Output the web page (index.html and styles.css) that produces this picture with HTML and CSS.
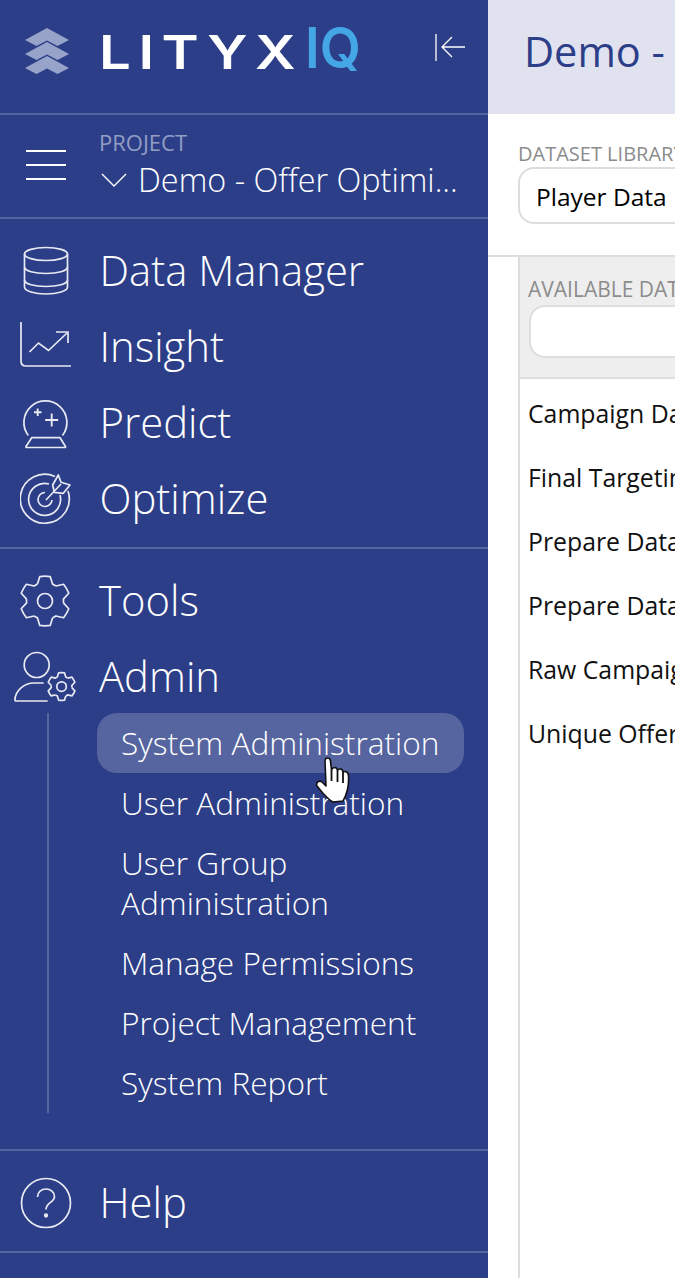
FILE: index.html
```html
<!DOCTYPE html>
<html lang="en">
<head>
<meta charset="utf-8">
<title>LityxIQ</title>
<link rel="stylesheet" href="styles.css">
</head>
<body>
<svg class="defs" width="0" height="0" aria-hidden="true">
  <defs>
    <g id="gear-teeth">
      <g id="tooth"><path d="M18.480 9.100 20.800 1.550Q26 .8 31.200 1.550L33.520 9.100A18.500 18.500 0 0 1 36.870 11.030"/></g>
      <use href="#tooth" transform="rotate(60 26 26)"/>
      <use href="#tooth" transform="rotate(120 26 26)"/>
      <use href="#tooth" transform="rotate(180 26 26)"/>
      <use href="#tooth" transform="rotate(240 26 26)"/>
      <use href="#tooth" transform="rotate(300 26 26)"/>
    </g>
  </defs>
</svg>
<div class="app">
  <aside class="sidebar">
    <div class="brand">
      <svg class="brand-mark" viewBox="0 0 44 46" width="44" height="46"><g fill="#97a3c9"><path d="M22 0 44 12 32.500 18 22 12.500 11.500 18 0 12z"/><path d="M22 14 44 26 32.500 32 22 26.500 11.500 32 0 26z"/><path d="M22 28 44 40 32.500 46 22 40.500 11.500 46 0 40z"/></g></svg>
      <div class="wordmark"><span class="lityx">LITY<span class="lityx-end">X</span></span><span class="iq">IQ</span></div>
      <svg class="collapse" viewBox="0 0 32 28" width="32" height="28" fill="none" stroke="#fff" stroke-width="1.300"><path d="M2 1v27M31 14H8M18 4 8 14l10 10"/></svg>
    </div>
    <div class="project">
      <div class="burger"><span></span><span></span><span></span></div>
      <div class="project-info">
        <div class="project-label">PROJECT</div>
        <div class="project-name">
          <svg viewBox="0 0 26 16" width="26" height="16" fill="none" stroke="#fff" stroke-width="1.400"><path d="M1 2l12 12L25 2"/></svg>
          <span>Demo - Offer Optimi...</span>
        </div>
      </div>
    </div>
    <nav class="nav nav-main">
      <a class="nav-item"><span class="nav-icon">
        <svg viewBox="0 0 52 52" width="52" height="52" fill="none" stroke="#e8eaf3" stroke-width="1.700"><ellipse cx="26" cy="9" rx="21.500" ry="6.500"/><path d="M4.500 9v33c0 4 10 7 21.500 7s21.500-3 21.500-7V9"/><path d="M4.500 22c0 4 10 6.500 21.500 6.500S47.500 26 47.500 22M4.500 35c0 4 10 6.500 21.500 6.500S47.500 39 47.500 35"/></svg>
      </span><span class="nav-label">Data Manager</span></a>
      <a class="nav-item"><span class="nav-icon">
        <svg viewBox="0 0 52 52" width="52" height="52" fill="none" stroke="#e8eaf3" stroke-width="1.700"><path d="M1 1v39c0 3 2 5 5 5h45"/><path d="M9.500 31 18.500 22l10 7.500L47 12"/><path d="M36 11h12v11"/></svg>
      </span><span class="nav-label">Insight</span></a>
      <a class="nav-item"><span class="nav-icon">
        <svg viewBox="0 0 52 52" width="52" height="52" fill="none" stroke="#e8eaf3" stroke-width="1.700" stroke-linejoin="round"><path d="M8.300 38.500A21.500 21.500 0 1 1 42.500 38.500"/><path d="M11.700 40.700H40L45.500 49.500c.3.600 0 1-.7 1H6.700c-.7 0-1-.4-.7-1z"/><path d="M17.700 11.500v7.500M14 15.300h7.500M31.700 16.500v13M25.200 23h13" stroke-width="1.900"/></svg>
      </span><span class="nav-label">Predict</span></a>
      <a class="nav-item"><span class="nav-icon">
        <svg viewBox="0 0 52 52" width="52" height="52" fill="none" stroke="#e8eaf3" stroke-width="1.700" stroke-linejoin="round"><path d="M35 3.500A24.500 24.500 0 1 0 48 18"/><path d="M29 11A16 16 0 1 0 40 22"/><path d="M25 19.500A7 7 0 1 0 32 27"/><path d="M26 27 41 11"/><path d="M34.300 19.300 32.700 12 38.300 2 41 9.300 50 12 43.300 20.300z"/></svg>
      </span><span class="nav-label">Optimize</span></a>
    </nav>
    <nav class="nav nav-tools">
      <a class="nav-item"><span class="nav-icon">
        <svg viewBox="0 0 52 52" width="52" height="52" fill="none" stroke="#e8eaf3" stroke-width="1.700" stroke-linejoin="round"><use href="#gear-teeth"/><circle cx="26" cy="26" r="7.500"/></svg>
      </span><span class="nav-label">Tools</span></a>
      <a class="nav-item"><span class="nav-icon admin-icon">
        <svg viewBox="0 0 64 52" width="64" height="52" fill="none" stroke="#e8eaf3" stroke-width="1.700" stroke-linejoin="round"><circle cx="22.700" cy="14" r="12.500"/><path d="M29 32H20C10 32 1 40 1 49c0 .5 .5 1 1 1H33" stroke-linecap="round"/><g transform="translate(33 21) scale(.56)" stroke-width="3"><use href="#gear-teeth"/><circle cx="26" cy="26" r="8.500"/></g></svg>
      </span><span class="nav-label">Admin</span></a>
      <ul class="subnav">
        <li class="active">System Administration</li>
        <li>User Administration</li>
        <li>User Group Administration</li>
        <li>Manage Permissions</li>
        <li>Project Management</li>
        <li>System Report</li>
      </ul>
    </nav>
    <nav class="nav nav-help">
      <a class="nav-item"><span class="nav-icon">
        <svg viewBox="0 0 52 52" width="52" height="52" fill="none" stroke="#e8eaf3" stroke-width="1.700"><circle cx="26" cy="26" r="24.500"/><path d="M17.500 20c0-5 4-8 8.500-8s8.500 3 8.500 7.500c0 6-8.500 6-8.500 13"/><circle cx="26" cy="38.500" r="1.300" fill="#e8eaf3"/></svg>
      </span><span class="nav-label">Help</span></a>
    </nav>
    <svg class="cursor" viewBox="-1 0 35 48" width="35" height="48"><path d="M9 5C9 1 14 1 14.500 5L15.500 14C17 10.500 21 10.500 21.500 14.500 23 12 27 12.500 27 16.500 28.500 14.500 32.500 15.500 32.500 20 33 28 31 38 27 45L17 46C11 43 6 36 1 30-.5 27 3 23.500 6 26L10 30Z" fill="#fff" stroke="#111" stroke-width="1.600" stroke-linejoin="round"/><path d="M15.500 14V25M21.500 14.500V26M27 16.500V27" stroke="#111" stroke-width="1.800" fill="none"/></svg>
  </aside>
  <main class="main">
    <header class="page-head">Demo - Offer Optimization</header>
    <section class="toolbar">
      <div class="field-label">DATASET LIBRARY</div>
      <div class="select">Player Data</div>
    </section>
    <section class="panel">
      <div class="panel-head">
        <div class="field-label">AVAILABLE DATASETS</div>
        <div class="search"></div>
      </div>
      <ul class="datasets">
        <li>Campaign Data</li>
        <li>Final Targeting</li>
        <li>Prepare Data</li>
        <li>Prepare Data</li>
        <li>Raw Campaign</li>
        <li>Unique Offers</li>
      </ul>
    </section>
  </main>
</div>
</body>
</html>
```

FILE: styles.css
```css
* { box-sizing: border-box; }
html, body { margin: 0; height: 100%; overflow: hidden; }
body { font-family: "Open Sans", "Liberation Sans", sans-serif; background: #fff; }
ul { list-style: none; margin: 0; padding: 0; }
.defs { position: absolute; }

.app { display: flex; width: 1200px; height: 1278px; }

.sidebar {
  position: relative;
  flex: 0 0 488px;
  background: #2c3e88;
  color: #fff;
  font-weight: 300;
  display: flex;
  flex-direction: column;
}

.brand {
  flex: none;
  height: 115px;
  border-bottom: 2px solid #56659f;
  display: flex;
  align-items: flex-start;
  padding: 28px 22px 0 25px;
}
.brand-mark { flex: none; }
.wordmark { display: flex; align-items: flex-end; height: 42px; margin-left: 30px; margin-top: -1px; }
.lityx {
  display: inline-block;
  font-family: Inter, "Open Sans", sans-serif;
  font-weight: 600;
  font-size: 47px;
  line-height: 34px;
  height: 34px;
  letter-spacing: 6.300px;
  color: #fff;
  transform: scaleX(1.2);
  transform-origin: left center;
}
.lityx-end { letter-spacing: 0; }
.iq {
  display: inline-block;
  font-family: Inter, "Open Sans", sans-serif;
  font-weight: 600;
  font-size: 56px;
  line-height: 42px;
  height: 42px;
  color: #45a6e6;
  margin-left: 42px;
  transform: scaleX(.95);
  transform-origin: left center;
}
.collapse { margin-left: auto; margin-top: 5px; }

.project {
  flex: none;
  height: 104px;
  border-bottom: 2px solid #56659f;
  display: flex;
  align-items: center;
  padding: 0 30px 0 26px;
}
.burger { flex: 0 0 40px; display: flex; flex-direction: column; gap: 12px; margin-right: 33px; margin-top: -2px; }
.burger span { display: block; height: 2px; background: #fff; }
.project-info { min-width: 0; flex: 1; }
.project-label { font-size: 22px; line-height: 30px; color: #a4aecf; font-weight: 400; opacity: .85; margin-top: -4px; }
.project-name { display: flex; align-items: center; gap: 11px; font-size: 32.400px; line-height: 44px; white-space: nowrap; }
.project-name svg { flex: none; margin-left: 2px; margin-top: 2px; }

.nav { flex: none; border-bottom: 2px solid #56659f; }
.nav-main { padding: 14px 0 10px; }
.nav-tools { padding: 14px 0 36px; }
.nav-help { padding: 14px 0 10px; }
.nav-item {
  display: flex;
  align-items: center;
  height: 76px;
  font-size: 41.800px;
  padding-left: 20px;
}
.nav-label { margin-bottom: 4px; }
.nav-icon { flex: 0 0 80px; display: flex; align-items: center; height: 52px; }
.nav-main .nav-icon, .nav-help .nav-icon { flex-basis: 79.500px; }
.nav-tools .nav-item { padding-left: 19px; }
.admin-icon { margin-left: -5px; flex-basis: 85px; }

.subnav {
  margin-left: 47px;
  border-left: 2px solid #56659f;
  margin-top: -2px;
  padding-left: 48px;
  width: 417px;
  font-size: 31.600px;
  line-height: 40px;
}
.subnav li { padding: 10px 10px 10px 24px; border-radius: 20px; }
.subnav .active { background: #56659f; }

.cursor { position: absolute; left: 315px; top: 756px; }

.main { flex: 1; min-width: 0; display: flex; flex-direction: column; }
.page-head {
  flex: none;
  height: 114px;
  background: #e0e2ef;
  color: #2c3e88;
  font-size: 41.500px;
  font-weight: 400;
  line-height: 103px;
  padding-left: 36px;
  white-space: nowrap;
}
.toolbar { flex: none; height: 143px; border-bottom: 2px solid #ddd; padding: 27px 0 0 30px; }
.field-label { font-size: 20px; line-height: 26px; color: #8c8c8c; white-space: nowrap; }
.select {
  height: 57px;
  width: 400px;
  border: 2px solid #ddd;
  border-radius: 16px;
  font-size: 24.500px;
  line-height: 55px;
  padding-left: 16px;
  color: #000;
}
.panel { flex: 1; margin-left: 30px; border-left: 2px solid #ddd; }
.panel-head { height: 122px; background: #eee; border-bottom: 2px solid #ddd; padding: 19px 0 0 8px; }
.panel-head .field-label { font-size: 21px; }
.search { height: 53px; margin-top: 3px; margin-left: 1px; background: #fff; border: 2px solid #ddd; border-radius: 16px; }
.datasets { padding: 2px 0 0 8px; font-size: 24.800px; color: #111; }
.datasets li { height: 64px; line-height: 64px; white-space: nowrap; }
```
